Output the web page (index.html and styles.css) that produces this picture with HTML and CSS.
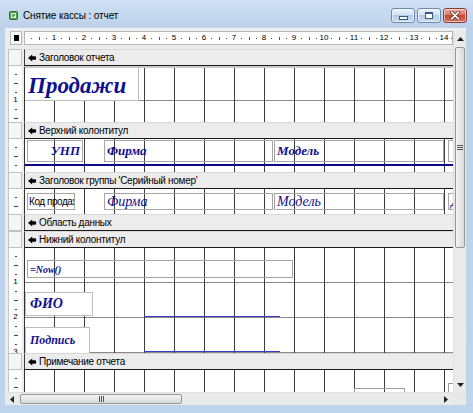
FILE: index.html
```html
<!DOCTYPE html>
<html>
<head>
<meta charset="utf-8">
<title>Снятие кассы : отчет</title>
<link rel="stylesheet" href="styles.css">
</head>
<body>
<div class="window">
  <div class="titlebar">
    <svg class="appicon" viewBox="0 0 9 9" width="9" height="9">
      <rect x="0.5" y="0.5" width="8" height="8" rx="1" fill="#4aa84a" stroke="#2d6f2d"/>
      <rect x="2" y="2" width="5" height="5" fill="#e8f5e0"/>
      <path d="M2.8 3.3h3.4M2.8 4.5h3.4M2.8 5.7h2.4" stroke="#2d6f2d" stroke-width="0.7"/>
    </svg>
    <span class="title">Снятие кассы : отчет</span>
    <div class="caption-btns">
      <div class="cbtn"><span class="min-glyph"></span></div>
      <div class="cbtn"><span class="max-glyph"></span></div>
      <div class="cbtn close">
        <svg viewBox="0 0 10 9" width="10" height="9">
          <path d="M1.5 1.2L8.5 7.8M8.5 1.2L1.5 7.8" stroke="#5a2020" stroke-width="3.2" stroke-linecap="round"/>
          <path d="M1.5 1.2L8.5 7.8M8.5 1.2L1.5 7.8" stroke="#ffffff" stroke-width="1.8" stroke-linecap="round"/>
        </svg>
      </div>
    </div>
  </div>

  <div class="client">
    <div class="upper">
      <div class="designer">
        <div class="row ruler-row">
          <div class="corner"><span class="sel"></span></div>
          <div class="hruler">
            <span class="hr-pad"></span>
            <span class="hn">1</span><span class="hn">2</span><span class="hn">3</span><span class="hn">4</span><span class="hn">5</span><span class="hn">6</span><span class="hn">7</span><span class="hn">8</span><span class="hn">9</span><span class="hn">10</span><span class="hn">11</span><span class="hn">12</span><span class="hn">13</span><span class="hn">14</span>
          </div>
        </div>

        <!-- Report header -->
        <div class="row hdr">
          <div class="lr lr-hdr"></div>
          <div class="sec-hdr"><svg class="selicon" viewBox="0 0 9 8" width="9" height="8"><path d="M0 4L4.2 0.4V2.2H7.6Q9 4 7.6 5.8H4.2V7.6Z" fill="#000"/></svg>Заголовок отчета</div>
        </div>
        <div class="row body b1">
          <div class="lr lr-body"><span class="lr-pad"></span><span class="vn">1</span></div>
          <div class="grid g1">
            <div class="lbl-title">Продажи</div>
          </div>
        </div>

        <!-- Page header -->
        <div class="row hdr">
          <div class="lr lr-hdr"></div>
          <div class="sec-hdr"><svg class="selicon" viewBox="0 0 9 8" width="9" height="8"><path d="M0 4L4.2 0.4V2.2H7.6Q9 4 7.6 5.8H4.2V7.6Z" fill="#000"/></svg>Верхний колонтитул</div>
        </div>
        <div class="row body b2">
          <div class="lr lr-body"></div>
          <div class="grid g2">
            <div class="ctl-row r2">
              <div class="ctl c-unp"><span class="bi">УНП</span></div>
              <div class="ctl c-firm"><span class="bi">Фирма</span></div>
              <div class="ctl c-model"><span class="bi">Модель</span></div>
              <div class="ctl c-extra"></div>
            </div>
            <div class="navy-line"></div>
          </div>
        </div>

        <!-- Group header -->
        <div class="row hdr">
          <div class="lr lr-hdr"></div>
          <div class="sec-hdr"><svg class="selicon" viewBox="0 0 9 8" width="9" height="8"><path d="M0 4L4.2 0.4V2.2H7.6Q9 4 7.6 5.8H4.2V7.6Z" fill="#000"/></svg>Заголовок группы 'Серийный номер'</div>
        </div>
        <div class="row body b3">
          <div class="lr lr-body"></div>
          <div class="grid g3">
            <div class="ctl-row r3">
              <div class="ctl c-code"><span class="plain">Код продаж</span></div>
              <div class="ctl c-firm2"><span class="it">Фирма</span></div>
              <div class="ctl c-model"><span class="it">Модель</span></div>
              <div class="ctl c-extra2"><span class="it">Д</span></div>
            </div>
          </div>
        </div>

        <!-- Detail -->
        <div class="row hdr">
          <div class="lr lr-hdr"></div>
          <div class="sec-hdr"><svg class="selicon" viewBox="0 0 9 8" width="9" height="8"><path d="M0 4L4.2 0.4V2.2H7.6Q9 4 7.6 5.8H4.2V7.6Z" fill="#000"/></svg>Область данных</div>
        </div>

        <!-- Page footer -->
        <div class="row hdr">
          <div class="lr lr-hdr"></div>
          <div class="sec-hdr"><svg class="selicon" viewBox="0 0 9 8" width="9" height="8"><path d="M0 4L4.2 0.4V2.2H7.6Q9 4 7.6 5.8H4.2V7.6Z" fill="#000"/></svg>Нижний колонтитул</div>
        </div>
        <div class="row body b5">
          <div class="lr lr-body"><span class="lr-pad"></span><span class="vn">1</span><span class="vn">2</span><span class="vn">3</span></div>
          <div class="grid g5">
            <div class="ctl c-now"><span class="bi small">=Now()</span></div>
            <div class="sign-row r-fio">
              <div class="ctl c-fio"><span class="bi fio">ФИО</span></div>
              <div class="blue-line l-fio"></div>
            </div>
            <div class="sign-row r-sign">
              <div class="ctl c-sign"><span class="bi sign">Подпись</span></div>
              <div class="blue-line l-sign"></div>
            </div>
          </div>
        </div>

        <!-- Report footer -->
        <div class="row hdr hdr-last">
          <div class="lr lr-hdr"></div>
          <div class="sec-hdr"><svg class="selicon" viewBox="0 0 9 8" width="9" height="8"><path d="M0 4L4.2 0.4V2.2H7.6Q9 4 7.6 5.8H4.2V7.6Z" fill="#000"/></svg>Примечание отчета</div>
        </div>
        <div class="row body b6">
          <div class="lr lr-body"></div>
          <div class="grid g6">
            <div class="ctl c-foot1"></div>
            <div class="ctl c-foot2"></div>
          </div>
        </div>
      </div>

      <div class="vscroll">
        <div class="sb-btn"><svg viewBox="0 0 7 4" width="7" height="4"><path d="M0 4L3.5 0L7 4Z" fill="#202020"/></svg></div>
        <div class="vthumb"><span class="grip-h"></span></div>
        <div class="sb-fill"></div>
        <div class="sb-btn"><svg viewBox="0 0 7 4" width="7" height="4"><path d="M0 0L3.5 4L7 0Z" fill="#202020"/></svg></div>
      </div>
    </div>

    <div class="lower">
      <div class="hscroll">
        <div class="sb-btn hb"><svg viewBox="0 0 4 7" width="4" height="7"><path d="M4 0L0 3.5L4 7Z" fill="#202020"/></svg></div>
        <div class="hthumb"><span class="grip-v"></span></div>
        <div class="sb-fill"></div>
        <div class="sb-btn hb"><svg viewBox="0 0 4 7" width="4" height="7"><path d="M0 0L4 3.5L0 7Z" fill="#202020"/></svg></div>
      </div>
      <div class="sizebox"></div>
    </div>
  </div>
</div>
</body>
</html>
```
FILE: styles.css
```css
* { box-sizing: border-box; }
html, body { margin: 0; padding: 0; }
body {
  width: 473px;
  height: 413px;
  overflow: hidden;
  font-family: "Liberation Sans", Arial, sans-serif;
  background: #c3d7ed;
}

.window {
  width: 473px;
  height: 413px;
  display: flex;
  flex-direction: column;
  padding: 0 7px 8px 5px;
  background: linear-gradient(#cfe0f3 0px, #bcd2ea 28px, #bed4ec 100%);
}

/* title bar */
.titlebar {
  height: 28px;
  display: flex;
  align-items: flex-start;
  flex: none;
}
.appicon { margin: 11px 5px 0 4px; flex: none; }
.title {
  margin-top: 10px;
  font-size: 10px;
  letter-spacing: -0.1px;
  color: #000;
  flex: 1;
  line-height: 12px;
}
.caption-btns {
  display: flex;
  gap: 2px;
  margin-top: 8px;
  margin-right: -1px;
}
.cbtn {
  width: 24px;
  height: 15px;
  border: 1px solid #6a87ac;
  border-radius: 3px;
  background: linear-gradient(#eaf2fb 0%, #d3e2f3 45%, #b6cde8 50%, #c9dcf1 100%);
  display: flex;
  align-items: center;
  justify-content: center;
  box-shadow: inset 0 0 0 1px rgba(255,255,255,0.55);
}
.cbtn.close {
  border-color: #8b3b35;
  background: linear-gradient(#eba99c 0%, #d97867 45%, #c7472f 50%, #d7765f 100%);
}
.min-glyph {
  width: 9px;
  height: 4px;
  margin-top: 5px;
  border: 1px solid #3b5a82;
  background: #fff;
}
.max-glyph {
  width: 8px;
  height: 7px;
  border: 1px solid #3b5a82;
  border-top-width: 2px;
  background: #fff;
  box-shadow: inset 0 0 0 1px #fff;
}

/* client */
.client {
  flex: 1;
  display: flex;
  flex-direction: column;
  background: #ececec;
  border-top: 1px solid #eef3f8;
}
.upper {
  display: flex;
  height: 363px;
}
.designer {
  width: 448px;
  padding: 2px 0 0 3px;
  overflow: hidden;
}
.row { display: flex; }
.lr {
  width: 14px;
  margin-right: 2px;
  flex: none;
}

/* top ruler */
.ruler-row { height: 14px; margin-bottom: 4px; }
.corner {
  width: 12px;
  margin-left: 2px;
  margin-right: 2px;
  height: 14px;
  background: #fafafa;
  border: 1px solid #b8b8b8;
  display: flex;
  align-items: center;
  justify-content: center;
}
.sel { width: 5px; height: 6px; background: #000; }
.hruler {
  width: 429px;
  height: 14px;
  border: 1px solid #b4b4b4;
  background-color: #fff;
  background-image:
    linear-gradient(to right, transparent 7px, #555 7px, #555 8px, transparent 8px),
    linear-gradient(to right, transparent 15px, #555 15px, #555 16px, transparent 16px);
  background-size: 15px 1px, 30px 3px;
  background-position: -1px 50%, -1px 50%;
  background-repeat: repeat-x;
  display: flex;
  font-size: 8px;
  line-height: 12px;
  color: #000;
  overflow: hidden;
}
.hr-pad { width: 14px; flex: none; }
.hn { width: 30px; flex: none; text-align: center; }

/* section headers */
.hdr { height: 17px; }
.lr-hdr {
  background: #f6f6f6;
  border: 1px solid #c2c2c2;
}
.sec-hdr {
  width: 429px;
  height: 17px;
  background: #ececec;
  border-left: 1px solid #3a3a3a;
  border-top: 1px solid #d8d8d8;
  border-bottom: 1px solid #1a1a1a;
  display: flex;
  align-items: center;
  padding-left: 3px;
  font-size: 10px;
  letter-spacing: -0.3px;
  color: #000;
  white-space: nowrap;
}
.selicon { margin-right: 2px; flex: none; }

/* section bodies */
.lr-body {
  background-color: #fdfdfd;
  border-left: 1px solid #c8c8c8;
  background-image:
    linear-gradient(to bottom, transparent 8px, #444 8px, #444 9px, transparent 9px, transparent 26px, #444 26px, #444 27px, transparent 27px),
    linear-gradient(to bottom, transparent 17px, #444 17px, #444 18px, transparent 18px);
  background-size: 2px 35px, 4px 35px;
  background-position: 6px 0, 5px 0;
  background-repeat: repeat-y;
  display: flex;
  flex-direction: column;
  align-items: center;
  overflow: hidden;
  font-size: 8px;
  color: #000;
}
.lr-pad { height: 16px; flex: none; }
.vn {
  height: 35px;
  flex: none;
  display: flex;
  align-items: center;
  line-height: 8px;
}
.grid {
  width: 429px;
  background-color: #fff;
  border-left: 1px solid #333;
  background-image:
    linear-gradient(to right, transparent 29px, #3c3c3c 29px, #3c3c3c 30px),
    linear-gradient(to bottom, transparent 34px, #8a8a8a 34px, #8a8a8a 35px);
  background-size: 30px 100%, 100% 35px;
  background-position: 0 0, 0 0;
}
.b1 { height: 56px; }
.b2 { height: 33px; }
.b3 { height: 25px; }
.b5 { height: 105px; }
.b6 { height: 30px; }

.g1 { border-top: 2px solid #c8c8c8; background-position: 0 -2px, 0 -2px; }
.g2, .g3, .g5 { display: flex; flex-direction: column; }
.g6 { display: flex; align-items: flex-start; }

.ctl {
  border: 1px solid #a6a6a6;
  overflow: hidden;
  white-space: nowrap;
  flex: none;
}

.lbl-title {
  width: 114px;
  height: 33px;
  background: #fff;
  border-right: 1px solid #bdbdbd;
  border-bottom: 1px solid #bdbdbd;
  padding: 6px 0 0 3px;
  font-family: "Liberation Serif", "Times New Roman", serif;
  font-weight: bold;
  font-style: italic;
  font-size: 23px;
  line-height: 23px;
  color: #10108f;
}

.bi, .it {
  font-family: "Liberation Serif", "Times New Roman", serif;
  font-style: italic;
  color: #10108f;
}
.bi { font-weight: bold; font-size: 13px; }
.it { font-size: 14px; }
.plain { font-size: 10px; color: #000; letter-spacing: -0.45px; }

.ctl-row { display: flex; align-items: flex-start; }
.r2 { margin-top: 1px; height: 23px; }
.r2 .ctl { height: 22px; display: flex; align-items: center; padding-left: 2px; }
.c-unp { margin-left: 2px; width: 56px; justify-content: flex-end; padding-right: 2px; }
.c-firm { margin-left: 21px; width: 169px; }
.c-model { margin-left: 1px; width: 170px; }
.c-extra { margin-left: 4px; width: 40px; }
.navy-line { height: 2px; margin-top: 1px; background: #0a0a86; }

.r3 { margin-top: 4px; }
.r3 .ctl { height: 17px; display: flex; align-items: center; padding-left: 2px; }
.r3 .c-code { margin-left: 2px; width: 48px; padding-left: 1px; }
.c-firm2 { margin-left: 29px; width: 169px; }
.c-extra2 { margin-left: 4px; width: 40px; }

.c-now {
  margin: 12px 0 0 2px;
  width: 266px;
  height: 18px;
  display: flex;
  align-items: center;
  padding-left: 2px;
}
.small { font-size: 10px; }
.sign-row { display: flex; align-items: flex-start; }
.r-fio { margin-top: 14px; height: 25px; }
.r-sign { margin-top: 10px; height: 26px; }
.c-fio {
  width: 68px;
  height: 24px;
  background: #fff;
  border-color: #bdbdbd;
  display: flex;
  align-items: center;
  padding-left: 4px;
}
.fio { font-size: 14px; }
.c-sign {
  width: 65px;
  height: 26px;
  background: #fff;
  border-color: #bdbdbd;
  border-bottom: none;
  display: flex;
  align-items: center;
  padding-left: 4px;
}
.sign { font-size: 12px; }
.blue-line { height: 1px; width: 136px; background: #3b3bc6; }
.l-fio { margin-left: 51px; margin-top: 24px; }
.l-sign { margin-left: 54px; margin-top: 24px; }

.c-foot1 { margin: 18px 0 0 329px; width: 51px; height: 12px; border-color: #9c9c9c; }
.c-foot2 { margin: 13px 0 0 43px; width: 10px; height: 12px; border-color: #9c9c9c; border-right: none; border-bottom: none; }

/* scrollbars */
.vscroll {
  width: 13px;
  margin-top: 2px;
  display: flex;
  flex-direction: column;
  background: #eaeaea;
  border-left: 1px solid #e0e0e0;
}
.sb-btn {
  height: 15px;
  flex: none;
  display: flex;
  align-items: center;
  justify-content: center;
}
.vthumb {
  height: 201px;
  margin: 1px 1px 0 1px;
  border: 1px solid #979797;
  border-radius: 2px;
  background: linear-gradient(to right, #f4f4f4, #e6e6e6 50%, #d9d9d9);
  display: flex;
  align-items: center;
  justify-content: center;
  flex: none;
}
.grip-h {
  width: 6px;
  height: 5px;
  background: repeating-linear-gradient(to bottom, #555 0, #555 1px, transparent 1px, transparent 2px);
}
.sb-fill { flex: 1; }

.lower { display: flex; height: 13px; }
.hscroll {
  width: 448px;
  display: flex;
  background: #eaeaea;
  border-top: 1px solid #e0e0e0;
}
.hb { width: 14px; height: 12px; }
.hthumb {
  width: 162px;
  margin: 1px 0 0 1px;
  height: 10px;
  border: 1px solid #979797;
  border-radius: 2px;
  background: linear-gradient(#f4f4f4, #e6e6e6 50%, #d9d9d9);
  display: flex;
  align-items: center;
  justify-content: center;
  flex: none;
}
.grip-v {
  width: 5px;
  height: 6px;
  background: repeating-linear-gradient(to right, #555 0, #555 1px, transparent 1px, transparent 2px);
}
.sizebox { width: 13px; height: 13px; background: #e8e8e8; }
```
